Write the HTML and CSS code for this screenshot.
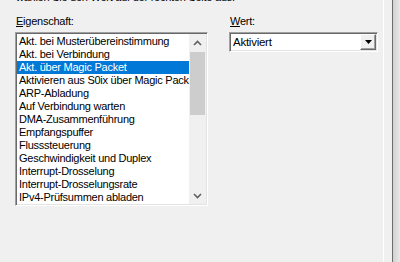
FILE: index.html
```html
<!DOCTYPE html>
<html lang="de">
<head>
    <meta charset="UTF-8">
    <title>Erweitert</title>
    <link rel="stylesheet" href="styles.css">
</head>
<body>
    <div class="window">
        <section class="tab">
            <p class="intro">wählen Sie den Wert auf der rechten Seite aus:</p>

            <div class="fields">
                <div class="property">
                    <label class="label"><u>E</u>igenschaft:</label>
                    <div class="listbox">
                        <ul class="items">
                            <li>Akt. bei Musterübereinstimmung</li>
                            <li>Akt. bei Verbindung</li>
                            <li class="selected">Akt. über Magic Packet</li>
                            <li>Aktivieren aus S0ix über Magic Packet</li>
                            <li>ARP-Abladung</li>
                            <li>Auf Verbindung warten</li>
                            <li>DMA-Zusammenführung</li>
                            <li>Empfangspuffer</li>
                            <li>Flusssteuerung</li>
                            <li>Geschwindigkeit und Duplex</li>
                            <li>Interrupt-Drosselung</li>
                            <li>Interrupt-Drosselungsrate</li>
                            <li>IPv4-Prüfsummen abladen</li>
                        </ul>
                        <div class="scrollbar">
                            <div class="arrow">
                                <svg width="9" height="6" viewBox="0 0 9 6"><path d="M1 5 L4.5 1.5 L8 5" fill="none" stroke="#606060" stroke-width="1.6"/></svg>
                            </div>
                            <div class="track">
                                <div class="thumb"></div>
                            </div>
                            <div class="arrow">
                                <svg width="9" height="6" viewBox="0 0 9 6"><path d="M1 1 L4.5 4.5 L8 1" fill="none" stroke="#606060" stroke-width="1.6"/></svg>
                            </div>
                        </div>
                    </div>
                </div>

                <div class="value">
                    <label class="label"><u>W</u>ert:</label>
                    <div class="combo">
                        <span class="combo-text">Aktiviert</span>
                        <span class="combo-button">
                            <svg width="7" height="4" viewBox="0 0 7 4"><path d="M0 0 H7 L3.5 4 Z" fill="#000"/></svg>
                        </span>
                    </div>
                </div>
            </div>
        </section>

        <div class="edge"></div>
    </div>
</body>
</html>
```

FILE: styles.css
```css
html,
body {
    margin: 0;
    height: 100%;
}

body {
    background-color: #f0f0f0;
    overflow: hidden;
    font-family: "Liberation Sans", Arial, sans-serif;
    font-size: 11px;
    letter-spacing: -0.25px;
    color: #000;
}

.window {
    display: flex;
    height: 262px;
}

.tab {
    width: 368px;
    padding-left: 15px;
    border-right: 1px solid #ffffff;
}

.intro {
    margin: -9px 0 0 1px;
    line-height: 13px;
    white-space: nowrap;
}

.fields {
    display: flex;
    gap: 21px;
    margin-top: 11px;
}

.label {
    display: block;
    line-height: 13px;
    margin: 0 0 4px 1px;
}

/* Eigenschaft-Liste */

.listbox {
    display: flex;
    width: 189px;
    height: 170px;
    border: 1px solid;
    border-color: #a0a0a0 #ffffff #ffffff #a0a0a0;
    box-shadow: inset 1px 1px #696969, inset -1px -1px #e3e3e3;
    padding: 1px;
    background-color: #fff;
}

.items {
    list-style: none;
    margin: 0;
    padding: 1px 0 0;
    width: 172px;
    overflow: hidden;
}

.items li {
    height: 13px;
    line-height: 13px;
    padding-left: 2px;
    white-space: nowrap;
    overflow: hidden;
}

.items .selected {
    background-color: #0078d7;
    color: #fff;
}

.scrollbar {
    width: 17px;
    display: flex;
    flex-direction: column;
    background-color: #f0f0f0;
}

.arrow {
    height: 17px;
    display: flex;
    align-items: center;
    justify-content: center;
}

.track {
    flex: 1;
    padding: 1px 1px 0;
}

.thumb {
    height: 63px;
    background-color: #cdcdcd;
}

/* Wert-Auswahl */

.combo {
    display: flex;
    align-items: center;
    width: 145px;
    height: 16px;
    border: 1px solid;
    border-color: #a0a0a0 #ffffff #ffffff #a0a0a0;
    box-shadow: inset 1px 1px #696969, inset -1px -1px #e3e3e3;
    padding: 1px;
    background-color: #fff;
}

.combo-text {
    flex: 1;
    padding-left: 2px;
    font-size: 11.5px;
}

.combo-button {
    width: 14px;
    height: 14px;
    display: flex;
    align-items: center;
    justify-content: center;
    background-color: #f0f0f0;
    border: 1px solid;
    border-color: #ffffff #696969 #696969 #ffffff;
    box-shadow: inset -1px -1px #a0a0a0;
}

.edge {
    flex: 1;
    display: flex;
}

.edge:before {
    content: '';
    width: 8px;
    border-right: 1px solid #6d6d6d;
}

.edge:after {
    content: '';
    flex: 1;
    background: linear-gradient(to right, #d2d2d2, #e8e8e8);
}
```
